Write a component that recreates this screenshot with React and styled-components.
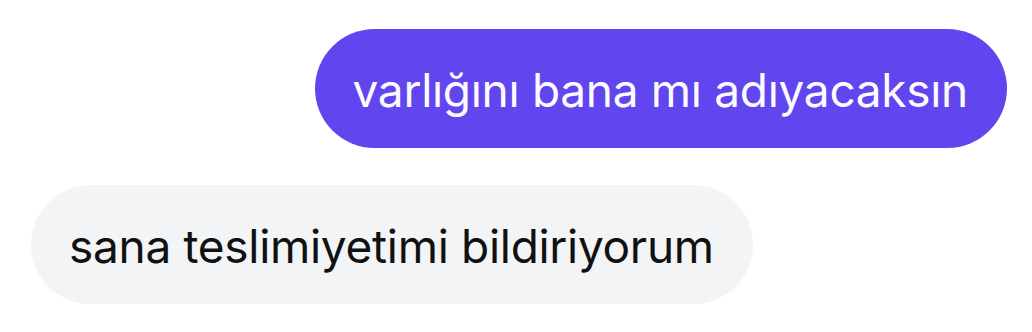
import styled, { createGlobalStyle } from 'styled-components';

const Global = createGlobalStyle`
  html, body {
    margin: 0;
    padding: 0;
    background: #fff;
  }
`;

const Thread = styled.div`
  box-sizing: border-box;
  width: 1032px;
  height: 332px;
  padding: 29px 25px 0 31px;
  display: flex;
  flex-direction: column;
  gap: 37px;
  font-family: Inter, 'Noto Sans', sans-serif;
`;

const Bubble = styled.div`
  box-sizing: border-box;
  height: 119px;
  display: flex;
  align-items: center;
  padding: 2px 39px 0 38px;
  border-radius: 60px;
  font-size: 46px;
  letter-spacing: -0.3px;
  white-space: nowrap;
  align-self: ${(p) => (p.$mine ? 'flex-end' : 'flex-start')};
  background: ${(p) => (p.$mine ? '#6145ef' : '#f2f4f6')};
  color: ${(p) => (p.$mine ? '#fdfaff' : '#111')};
`;

const App = () => (
  <>
    <Global />
    <Thread>
      <Bubble $mine>varlığını bana mı adıyacaksın</Bubble>
      <Bubble>sana teslimiyetimi bildiriyorum</Bubble>
    </Thread>
  </>
);

export default App;
